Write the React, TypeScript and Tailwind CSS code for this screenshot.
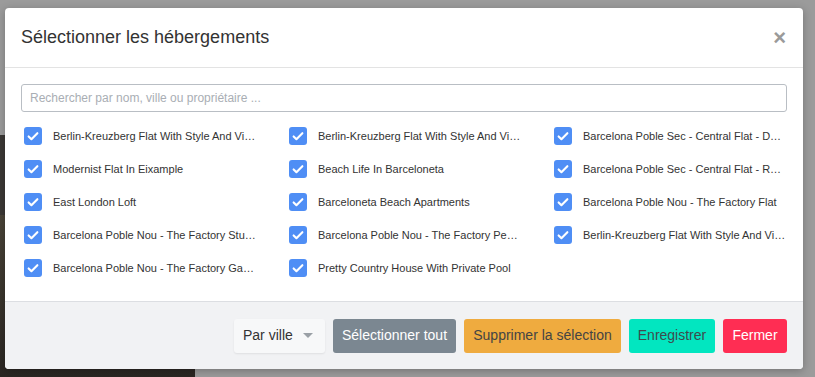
const items = [
  "Berlin-Kreuzberg Flat With Style And Vi…",
  "Berlin-Kreuzberg Flat With Style And Vi…",
  "Barcelona Poble Sec - Central Flat - D…",
  "Modernist Flat In Eixample",
  "Beach Life In Barceloneta",
  "Barcelona Poble Sec - Central Flat - R…",
  "East London Loft",
  "Barceloneta Beach Apartments",
  "Barcelona Poble Nou - The Factory Flat",
  "Barcelona Poble Nou - The Factory Stu…",
  "Barcelona Poble Nou - The Factory Pe…",
  "Berlin-Kreuzberg Flat With Style And Vi…",
  "Barcelona Poble Nou - The Factory Ga…",
  "Pretty Country House With Private Pool",
];

function Check() {
  return (
    <span className="flex h-[18px] w-[18px] shrink-0 items-center justify-center rounded-[3px] bg-[#4f8ef5]">
      <svg viewBox="0 0 16 16" className="h-[14px] w-[14px]" fill="none" stroke="white" strokeWidth="2.4" strokeLinecap="round" strokeLinejoin="round">
        <path d="M3 8.5l3.2 3.2L13 4.8" />
      </svg>
    </span>
  );
}

export default function App() {
  return (
    <div className="relative h-[377px] w-[815px] overflow-hidden bg-[#9b9b9b] font-['Liberation_Sans',Arial,sans-serif]">
      {/* page behind the overlay */}
      <div className="absolute left-0 top-[135px] h-[80px] w-[195px] bg-[#3b3835]" />
      <div className="absolute left-0 top-[215px] h-[162px] w-[195px] bg-gradient-to-b from-[#4a4438] to-[#2a2622]" />

      <div className="absolute left-[5px] top-[8px] flex h-[361px] w-[798px] flex-col overflow-hidden rounded-[4px] bg-white shadow-[0_2px_8px_rgba(0,0,0,0.25)]">
        <div className="flex h-[60px] shrink-0 items-center justify-between border-b border-[#e3e3e3] pl-[16px] pr-[17px]">
          <h2 className="text-[18px] text-[#333]">Sélectionner les hébergements</h2>
          <span className="text-[22px] font-bold leading-none text-[#9a9a9a]">×</span>
        </div>

        <div className="flex-1 px-[16px] pt-[16px]">
          <input
            placeholder="Rechercher par nom, ville ou propriétaire ..."
            className="h-[28px] w-[766px] rounded-[3px] border border-[#b9bec4] px-[8px] text-[12px] text-[#333] outline-none placeholder:text-[#a9aeb4]"
          />
          <div className="mt-[15px] grid grid-cols-[265px_265px_236px] gap-y-[15px] pl-[3px]">
            {items.map((name, i) => (
              <div key={i} className="flex h-[18px] items-center gap-[11px]">
                <Check />
                <span className="whitespace-nowrap text-[11px] text-[#333]">{name}</span>
              </div>
            ))}
          </div>
        </div>

        <div className="flex h-[68px] shrink-0 items-center justify-end gap-[8px] border-t border-[#dcdee2] bg-[#f1f2f4] pr-[16px]">
          <button className="flex h-[34px] w-[91px] items-center gap-[10px] rounded-[3px] bg-[#f7f8f9] pl-[9px] text-[14px] text-[#333] shadow-[0_1px_2px_rgba(0,0,0,0.08)]">
            Par ville
            <svg viewBox="0 0 10 5" className="h-[5px] w-[10px]"><path d="M0 0h10L5 5z" fill="#9aa0a6" /></svg>
          </button>
          <button className="h-[34px] w-[123px] rounded-[3px] bg-[#7b8791] text-[14px] text-white">Sélectionner tout</button>
          <button className="h-[34px] w-[157px] rounded-[3px] bg-[#efab3f] text-[14px] text-[#444]">Supprimer la sélection</button>
          <button className="h-[34px] w-[86px] rounded-[3px] bg-[#02e6c0] text-[14px] text-[#3e4b4d]">Enregistrer</button>
          <button className="h-[34px] w-[64px] rounded-[3px] bg-[#ff2d53] text-[14px] text-white">Fermer</button>
        </div>
      </div>
    </div>
  );
}
